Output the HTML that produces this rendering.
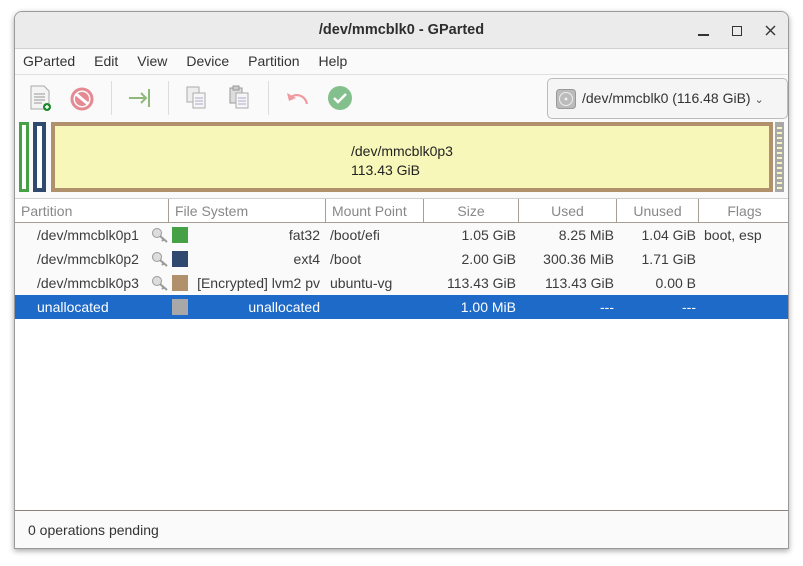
<!DOCTYPE html>
<html><head><meta charset="utf-8"><style>
*{box-sizing:border-box;margin:0;padding:0}
body{width:803px;height:566px;background:#fff;font-family:"Liberation Sans",sans-serif;font-size:14px;color:#3c3c3c;position:relative;overflow:hidden}
.win{position:absolute;left:14px;top:11px;width:775px;height:538px;background:#fafafa;border:1px solid #9a9a9a;border-radius:8px 8px 0 0;box-shadow:0 2px 6px rgba(0,0,0,.35);overflow:hidden}
.title{height:37px;background:#ebebeb;border-bottom:1px solid #d0d0d0;text-align:center;line-height:37px;font-weight:bold;font-size:14.5px;color:#2e2e2e;position:relative}
.ctl{position:absolute;top:0;font-weight:normal;color:#333}
.menu{height:26px;border-bottom:1px solid #e0e0e0;line-height:25px;padding-left:8px}
.menu span{margin-right:19px;color:#333}
.tb{height:44px;position:relative}
.tb svg{position:absolute}
.sep{position:absolute;top:6px;width:1px;height:34px;background:#ddd}
.combo{position:absolute;left:532px;top:3px;width:241px;height:41px;border:1px solid #bbb;border-radius:5px;background:#f5f5f5;line-height:39px;padding-left:34px;color:#333}
.hdr{position:absolute;top:186px;left:0;width:775px;height:25px;border-top:1px solid #cfcfcf;border-bottom:1px solid #a79f94;background:#fff}
.hdr div{position:absolute;top:0;height:24px;line-height:24px;color:#888;border-right:1px solid #a79f94;padding:0 6px}
.row{position:absolute;left:0;width:775px;height:24px;line-height:24px}
.row div{position:absolute;top:0;white-space:nowrap}
.r{text-align:right}
.sel{background:#1e6ac9;color:#fff}
.row .sw{top:4px;width:16px;height:16px}
.key{position:absolute;left:136px;top:4px}
</style></head><body>
<div class="win">
<div class="title">/dev/mmcblk0 - GParted
<span class="ctl" style="left:683px;top:22px;width:11px;height:1.5px;background:#333"></span>
<span class="ctl" style="left:717px;top:14px;width:10px;height:10px;border:1.5px solid #333"></span>
<svg class="ctl" style="left:750px;top:13px" width="11" height="11"><path d="M1 1l9 9M10 1l-9 9" stroke="#333" stroke-width="1.4"/></svg>
</div>
<div class="menu"><span>GParted</span><span>Edit</span><span>View</span><span>Device</span><span>Partition</span><span>Help</span></div>
<div class="tb">
<svg style="left:14px;top:10px" width="24" height="26"><path d="M2 1h13l5 5v18H2z" fill="#f4f4f4" stroke="#aaa"/><path d="M5 9h11M5 12h11M5 15h11M5 18h8" stroke="#999"/><circle cx="18" cy="22" r="4" fill="#1c8a2a"/><path d="M16 22h4M18 20v4" stroke="#fff" stroke-width="1.4"/></svg>
<svg style="left:55px;top:12px" width="24" height="24"><circle cx="12" cy="12" r="10" fill="none" stroke="#e58a93" stroke-width="3"/><circle cx="12" cy="12" r="7" fill="#e58a93"/><path d="M6 7l12 10" stroke="#fff" stroke-width="3"/></svg>
<div class="sep" style="left:96px"></div>
<svg style="left:112px;top:12px" width="26" height="22"><path d="M2 11h17M14 6l5 5-5 5" stroke="#8fb87a" stroke-width="2" fill="none"/><path d="M22 2v18" stroke="#8fb87a" stroke-width="2"/></svg>
<div class="sep" style="left:153px"></div>
<svg style="left:170px;top:10px" width="24" height="26"><rect x="2" y="2" width="12" height="15" fill="#eee" stroke="#aaa"/><rect x="8" y="8" width="12" height="15" fill="#f6f6f6" stroke="#aaa"/><path d="M10 13h8M10 16h8M10 19h8" stroke="#aac"/></svg>
<svg style="left:213px;top:10px" width="24" height="26"><rect x="2" y="3" width="12" height="15" fill="#ddd" stroke="#999"/><rect x="5" y="1" width="6" height="4" fill="#ccc" stroke="#999"/><rect x="8" y="8" width="12" height="15" fill="#f6f6f6" stroke="#aaa"/><path d="M10 13h8M10 16h8M10 19h8" stroke="#aac"/></svg>
<div class="sep" style="left:253px"></div>
<svg style="left:269px;top:12px" width="26" height="20"><path d="M23 17C21 8 11 5 5 12" stroke="#f09aa0" stroke-width="2.2" fill="none"/><path d="M3 6l2 8 7-3z" fill="#f09aa0"/></svg>
<svg style="left:312px;top:10px" width="26" height="26"><circle cx="13" cy="13" r="12" fill="#84bf8e"/><path d="M7 13l4 4 8-8" stroke="#fff" stroke-width="2.5" fill="none"/></svg>
<div class="combo"><svg style="left:8px;top:10px" width="20" height="20"><rect x="0.5" y="0.5" width="19" height="19" rx="3" fill="#bbb" stroke="#999"/><circle cx="10" cy="10" r="6.5" fill="none" stroke="#eee"/><circle cx="10" cy="10" r="1.5" fill="#eee"/></svg>/dev/mmcblk0 (116.48 GiB) <span style="font-size:11px;color:#555">&#8964;</span></div>
</div>
<div style="position:absolute;left:4px;top:110px;width:10px;height:70px;border:3px solid #46a146;background:#fff"></div>
<div style="position:absolute;left:18px;top:110px;width:13px;height:70px;border:4px solid #2f4a6e;background:#fff"></div>
<div style="position:absolute;left:36px;top:110px;width:722px;height:70px;border:4px solid #b1916b;background:#f7f7b9;padding:16px 0 0 296px;line-height:19px;color:#222">/dev/mmcblk0p3<br>113.43 GiB</div>
<div style="position:absolute;left:760px;top:110px;width:9px;height:70px;background:repeating-linear-gradient(#a8a8a8 0 3px,#f7f7b9 3px 5px);border:2px solid #a8a8a8"></div>
<div class="hdr">
<div style="left:0;width:154px">Partition</div>
<div style="left:154px;width:157px">File System</div>
<div style="left:311px;width:98px">Mount Point</div>
<div style="left:409px;width:95px;text-align:center">Size</div>
<div style="left:504px;width:98px;text-align:center">Used</div>
<div style="left:602px;width:82px;text-align:center">Unused</div>
<div style="left:684px;width:91px;text-align:center;border:none">Flags</div>
</div>
<div class="row" style="top:211px"><div style="left:22px">/dev/mmcblk0p1</div><svg class="key" width="18" height="16"><circle cx="6" cy="6" r="4.5" fill="#ddd" stroke="#999"/><path d="M9 9l7 6M13 12l-2 2" stroke="#999" stroke-width="2"/></svg><div class="sw" style="left:157px;background:#46a146"></div><div class="r" style="right:470px">fat32</div><div style="left:315px">/boot/efi</div><div class="r" style="right:274px">1.05 GiB</div><div class="r" style="right:176px">8.25 MiB</div><div class="r" style="right:94px">1.04 GiB</div><div style="left:689px">boot, esp</div></div>
<div class="row" style="top:235px"><div style="left:22px">/dev/mmcblk0p2</div><svg class="key" width="18" height="16"><circle cx="6" cy="6" r="4.5" fill="#ddd" stroke="#999"/><path d="M9 9l7 6M13 12l-2 2" stroke="#999" stroke-width="2"/></svg><div class="sw" style="left:157px;background:#2f4a6e"></div><div class="r" style="right:470px">ext4</div><div style="left:315px">/boot</div><div class="r" style="right:274px">2.00 GiB</div><div class="r" style="right:176px">300.36 MiB</div><div class="r" style="right:94px">1.71 GiB</div></div>
<div class="row" style="top:259px"><div style="left:22px">/dev/mmcblk0p3</div><svg class="key" width="18" height="16"><circle cx="6" cy="6" r="4.5" fill="#ddd" stroke="#999"/><path d="M9 9l7 6M13 12l-2 2" stroke="#999" stroke-width="2"/></svg><div class="sw" style="left:157px;background:#b1916b"></div><div class="r" style="right:470px">[Encrypted] lvm2 pv</div><div style="left:315px">ubuntu-vg</div><div class="r" style="right:274px">113.43 GiB</div><div class="r" style="right:176px">113.43 GiB</div><div class="r" style="right:94px">0.00 B</div></div>
<div class="row sel" style="top:283px"><div style="left:22px">unallocated</div><div class="sw" style="left:157px;background:#a8a8a8"></div><div class="r" style="right:470px">unallocated</div><div class="r" style="right:274px">1.00 MiB</div><div class="r" style="right:176px">---</div><div class="r" style="right:94px">---</div></div>
<div style="position:absolute;top:307px;left:0;width:775px;height:192px;background:#fff;border-bottom:1px solid #8a8078"></div>
<div style="position:absolute;top:510px;left:13px;color:#333">0 operations pending</div>
</div>
</body></html>
